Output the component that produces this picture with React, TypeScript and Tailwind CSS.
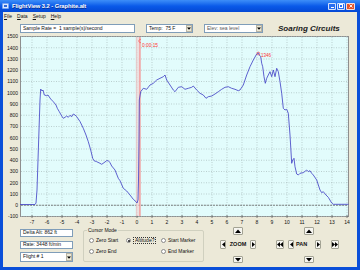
import React from 'react';

// altitude trace, already in page pixels (x: 15px per minute, y: 11.25px per 100 ft)
const trace: [number, number][] = [
  [20, 204.5], [35, 204.5], [36, 203], [37, 190], [38, 160], [39, 130], [40, 100], [40.7, 89],
  [42, 91], [43, 90], [44.3, 95], [46.7, 95.7], [48, 95], [49.3, 97], [50.7, 99], [53.3, 101.7],
  [56, 105], [57.3, 108.3], [59.3, 111.7], [61.7, 116], [63.3, 118.3], [65, 117.3], [66.7, 116],
  [68.3, 117.3], [70, 115.3], [71.7, 116.7], [73.3, 114], [75, 115], [76.7, 116.7], [80, 121.5],
  [83.3, 128.3], [86, 135], [88.3, 141.7], [90.7, 150], [92.7, 158.3], [94, 160.7], [96.7, 161.7],
  [100, 163.3], [101.7, 164.3], [104, 162.7], [106.7, 160.7], [108.3, 160.7], [110, 162.7],
  [111.7, 166], [115, 170], [118.3, 178.3], [120, 180.7], [123.3, 188.3], [126.7, 191], [130, 195],
  [133.3, 199.3], [136, 201.7], [137, 203], [138, 200], [138.5, 180], [139, 140], [139.3, 100],
  [140.7, 91.7], [143.3, 88.3], [146.7, 89.3], [150, 85], [153.3, 83.3], [156.7, 80], [160, 78.3],
  [163.3, 76.7], [165, 75], [166.7, 80], [170, 85], [173.3, 90], [175, 91.7], [178.3, 87.3],
  [181.7, 86.7], [185, 89.3], [188.3, 88.3], [191.7, 87.3], [193.3, 86], [196.7, 90], [200, 93.3],
  [203.3, 95], [206, 98.3], [208.3, 96.7], [211.7, 96], [215, 94], [218.3, 91.7], [221.7, 89.3],
  [225, 87.3], [228.3, 86.7], [231.7, 88.3], [235, 89.3], [238.3, 90.7], [240, 90], [243.3, 85],
  [246.7, 75], [250, 66.7], [253.3, 60], [256.7, 54], [258.3, 52.7], [259.3, 55], [260.7, 56.7],
  [261.7, 63.3], [262.7, 66.7], [264, 76.7], [265.3, 83.3], [266.7, 78.3], [268.3, 75], [270, 71.7],
  [271.7, 76.7], [273.3, 70], [275, 76.7], [276.7, 68.3], [278.3, 71.7], [280, 81.7], [281.7, 93.3],
  [283.3, 108.3], [285, 110], [286.7, 109.3], [288.3, 113.3], [290, 135], [291.7, 163.3],
  [292.7, 160], [294, 158.3], [295, 166.7], [296.7, 174], [298.3, 175], [300, 173.3], [303.3, 172.7],
  [306.7, 170], [308.3, 171.7], [310, 170.7], [311.7, 173.3], [313.3, 175], [316.7, 180], [320, 190],
  [321.7, 192.7], [323.3, 191.7], [326, 195], [328.3, 197.3], [331.7, 203], [333.3, 204.3],
  [348.5, 204.3],
];

const altTicks = [1500, 1400, 1300, 1200, 1100, 1000, 900, 800, 700, 600, 500, 400, 300, 200, 100, 0, -100];
const minTicks = Array.from({ length: 22 }, (_, i) => i - 7);

const yOf = (alt: number) => 36.5 + (1500 - alt) * 0.1125;
const xOf = (t: number) => 137 + t * 15;

function AltitudeChart() {
  return (
    <svg width={354} height={194} viewBox="3 33 354 194" className="block shrink-0">
      <rect x={20.5} y={36.5} width={328} height={180} fill="#e2fcfc" stroke="#8e8e8e" />
      {altTicks.map((v) => (
        <line key={`h${v}`} x1={21} x2={348} y1={yOf(v)} y2={yOf(v)} stroke="#a9bcbc" strokeWidth={0.7} strokeDasharray="1 1.5" />
      ))}
      {minTicks.map((t) => (
        <line key={`v${t}`} x1={xOf(t)} x2={xOf(t)} y1={37} y2={216} stroke="#a9bcbc" strokeWidth={0.7} strokeDasharray="1 1.5" />
      ))}
      {minTicks.map((t) => (
        <line key={`t${t}`} x1={xOf(t)} x2={xOf(t)} y1={215} y2={218} stroke="#555" strokeWidth={0.7} />
      ))}
      <line x1={21} x2={348} y1={yOf(0)} y2={yOf(0)} stroke="#6a6a6a" strokeWidth={0.8} strokeDasharray="2 1" />

      {/* cursor */}
      <rect x={136} y={37} width={4} height={179} fill="#f1d6d6" opacity={0.7} />
      <line x1={136.3} x2={136.3} y1={37} y2={216} stroke="#dcb0b0" strokeWidth={0.5} />
      <line x1={140} x2={140} y1={37} y2={216} stroke="#ff4545" strokeWidth={0.7} />
      <path d="M141 39.5a1.6 1.6 0 1 0 0 3" fill="none" stroke="#ff3b3b" strokeWidth={0.6} />
      <text x={142} y={46.5} fontSize={4.8} fill="#ff3030" fontFamily="'Liberation Sans', Arial, sans-serif">0:00:15</text>

      <polyline
        points={trace.map((p) => p.join(',')).join(' ')}
        fill="none"
        stroke="#4646c6"
        strokeWidth={0.85}
        strokeLinejoin="round"
      />

      {/* peak marker */}
      <circle cx={258.3} cy={53.5} r={1.4} fill="none" stroke="#ff3b3b" strokeWidth={0.6} />
      <text x={261} y={57} fontSize={4.5} fill="#ff3030" fontFamily="'Liberation Sans', Arial, sans-serif">1346</text>

      <g fontSize={5} fill="#111" fontFamily="'Liberation Sans', Arial, sans-serif">
        {altTicks.map((v) => (
          <text key={`yl${v}`} x={18} y={yOf(v) + 1.8} textAnchor="end">{v}</text>
        ))}
        {minTicks.map((t) => (
          <text key={`xl${t}`} x={xOf(t)} y={224} textAnchor="middle">{t}</text>
        ))}
      </g>
    </svg>
  );
}

function Caret() {
  return (
    <span className="w-[6px] h-full bg-[#ece9d8] border border-[#b8b4a4] flex items-center justify-center shrink-0">
      <svg width="4" height="3" viewBox="0 0 4 3"><path d="M0 0.4h4L2 2.8z" fill="#000" /></svg>
    </span>
  );
}

function Radio({ checked }: { checked?: boolean }) {
  return (
    <span className="w-[5px] h-[5px] rounded-full border border-[#8a8a8a] bg-white flex items-center justify-center shrink-0">
      {checked && <span className="w-[2px] h-[2px] rounded-full bg-[#111]" />}
    </span>
  );
}

function NavBtn({ className, children }: { className: string; children: React.ReactNode }) {
  return (
    <div className={`flex items-center justify-center bg-[#f6f5f0] border border-[#a3a394] rounded-[1px] shrink-0 ${className}`}>
      {children}
    </div>
  );
}

const Up = () => <svg width="6" height="4" viewBox="0 0 6 4"><path d="M0 4L3 0.6L6 4z" fill="#000" /></svg>;
const Down = () => <svg width="6" height="4" viewBox="0 0 6 4"><path d="M0 0L3 3.4L6 0z" fill="#000" /></svg>;
const Left = () => <svg width="3" height="5" viewBox="0 0 3 5"><path d="M3 0L0 2.5L3 5z" fill="#000" /></svg>;
const Right = () => <svg width="3" height="5" viewBox="0 0 3 5"><path d="M0 0L3 2.5L0 5z" fill="#000" /></svg>;
const LeftLeft = () => <svg width="6" height="5" viewBox="0 0 6 5"><path d="M3 0L0 2.5L3 5zM6 0L3 2.5L6 5z" fill="#000" /></svg>;
const RightRight = () => <svg width="6" height="5" viewBox="0 0 6 5"><path d="M0 0L3 2.5L0 5zM3 0L6 2.5L3 5z" fill="#000" /></svg>;

export default function App() {
  return (
    <div className="w-[360px] h-[270px] bg-[#0a4fd9] flex flex-col overflow-hidden font-['Liberation_Sans',Arial,sans-serif] text-[#111]">
      {/* Title bar */}
      <div className="h-[12px] shrink-0 flex items-center pl-[2px] pr-[5px] bg-gradient-to-b from-[#3d8ef8] via-[#0a5ae9] to-[#0548d4]">
        <div className="w-[7px] h-[6px] bg-[#dbe8ff] border border-[#7aa6f0] rounded-[1px] flex items-center justify-center">
          <div className="w-[3px] h-[2px] bg-[#2f68d8]" />
        </div>
        <span className="ml-[3px] text-white text-[5.8px] font-bold tracking-[-0.01em] [text-shadow:0.5px_0.5px_0_#0a2e8c]">
          FlightView 3.2 - Graphite.alt
        </span>
        <div className="ml-auto flex gap-[1px]">
          <div className="w-[8px] h-[7px] rounded-[1px] border border-white/80 bg-[#2a6ef0] flex items-end justify-start pl-[1.5px] pb-[1px]">
            <div className="w-[3px] h-[1px] bg-white" />
          </div>
          <div className="w-[8px] h-[7px] rounded-[1px] border border-white/80 bg-[#2a6ef0] flex items-center justify-center">
            <div className="w-[4px] h-[3.5px] border border-white border-t-[1.5px]" />
          </div>
          <div className="w-[9px] h-[7px] rounded-[1px] border border-white/80 bg-[#e2552c] flex items-center justify-center">
            <svg width="4" height="4" viewBox="0 0 4 4"><path d="M0.5 0.5L3.5 3.5M3.5 0.5L0.5 3.5" stroke="#fff" strokeWidth="0.9" /></svg>
          </div>
        </div>
      </div>

      {/* Client area */}
      <div className="flex-1 mx-[3px] mb-[3px] bg-[#ece9d8] flex flex-col">
        {/* Menu */}
        <div className="h-[9px] shrink-0 flex items-center gap-[5px] pl-[1px] text-[5px]">
          <span><u>F</u>ile</span>
          <span><u>D</u>ata</span>
          <span><u>S</u>etup</span>
          <span><u>H</u>elp</span>
        </div>

        {/* Top controls */}
        <div className="mt-[3px] h-[9px] shrink-0 flex items-center text-[5px]">
          <div className="ml-[17px] w-[115px] h-full bg-white border border-[#7f9db9] flex items-center px-[2px]">
            Sample Rate =&nbsp; 1 sample(s)/second
          </div>
          <div className="ml-[11px] w-[47px] h-full bg-white border border-[#7f9db9] flex items-center pl-[2px]">
            <span className="flex-1">Temp:&nbsp; 75 F</span>
            <Caret />
          </div>
          <div className="ml-[11px] w-[59px] h-full bg-white border border-[#7f9db9] flex items-center pl-[2px]">
            <span className="flex-1 text-[#555]">Elev: sea level</span>
            <Caret />
          </div>
          <span className="ml-[15px] text-[8px] font-bold italic text-[#202020] leading-none">Soaring Circuits</span>
        </div>

        <AltitudeChart />

        {/* Bottom controls */}
        <div className="flex-1 flex items-start pl-[17px] text-[5px]">
          <div className="mt-[2px] w-[53px] flex flex-col">
            <div className="h-[8px] bg-white border border-[#7f9db9] flex items-center px-[2px]">Delta Alt: 862 ft</div>
            <div className="mt-[4px] h-[8px] bg-white border border-[#7f9db9] flex items-center px-[2px]">Rate: 3448 ft/min</div>
            <div className="mt-[3px] h-[10px] bg-white border border-[#7f9db9] flex items-center pl-[2px]">
              <span className="flex-1">Flight # 1</span>
              <Caret />
            </div>
          </div>

          <div className="relative ml-[10px] mt-[3px] w-[121px] h-[32px] border border-[#d0d0bf] rounded-[2px]">
            <span className="absolute left-[3px] top-[-4px] px-[1px] bg-[#ece9d8] leading-[6px]">Cursor Mode</span>
            <div className="grid grid-cols-[37px_35px_40px] gap-y-[6px] pl-[5px] pt-[7px]">
              <div className="flex items-center gap-[2px] h-[5px]"><Radio /><span>Zero Start</span></div>
              <div className="flex items-center gap-[2px] h-[5px]">
                <Radio checked />
                <span className="border border-dotted border-[#333] px-[1px] leading-[5px]">Altitude?</span>
              </div>
              <div className="flex items-center gap-[2px] h-[5px]"><Radio /><span>Start Marker</span></div>
              <div className="flex items-center gap-[2px] h-[5px]"><Radio /><span>Zero End</span></div>
              <div />
              <div className="flex items-center gap-[2px] h-[5px]"><Radio /><span>End Marker</span></div>
            </div>
          </div>

          {/* Zoom */}
          <div className="ml-[15px] w-[38px] flex flex-col items-center">
            <NavBtn className="w-[10px] h-[8px]"><Up /></NavBtn>
            <div className="mt-[5px] h-[9px] flex items-center gap-[3px]">
              <NavBtn className="w-[6px] h-[9px]"><Left /></NavBtn>
              <span className="w-[18px] text-center font-bold text-[5.5px]">ZOOM</span>
              <NavBtn className="w-[6px] h-[9px]"><Right /></NavBtn>
            </div>
            <NavBtn className="mt-[7px] w-[10px] h-[7px]"><Down /></NavBtn>
          </div>

          {/* Pan */}
          <div className="ml-[19px] w-[63px] flex flex-col">
            <NavBtn className="ml-[28px] w-[10px] h-[8px]"><Up /></NavBtn>
            <div className="mt-[5px] h-[9px] flex items-center">
              <NavBtn className="w-[8px] h-[9px]"><LeftLeft /></NavBtn>
              <NavBtn className="ml-[4px] w-[6px] h-[9px]"><Left /></NavBtn>
              <span className="ml-[2px] w-[20px] font-bold text-[5.5px]">PAN</span>
              <NavBtn className="w-[6px] h-[9px]"><Right /></NavBtn>
              <NavBtn className="ml-[10px] w-[8px] h-[9px]"><RightRight /></NavBtn>
            </div>
            <NavBtn className="ml-[28px] mt-[7px] w-[10px] h-[7px]"><Down /></NavBtn>
          </div>
        </div>
      </div>
    </div>
  );
}
